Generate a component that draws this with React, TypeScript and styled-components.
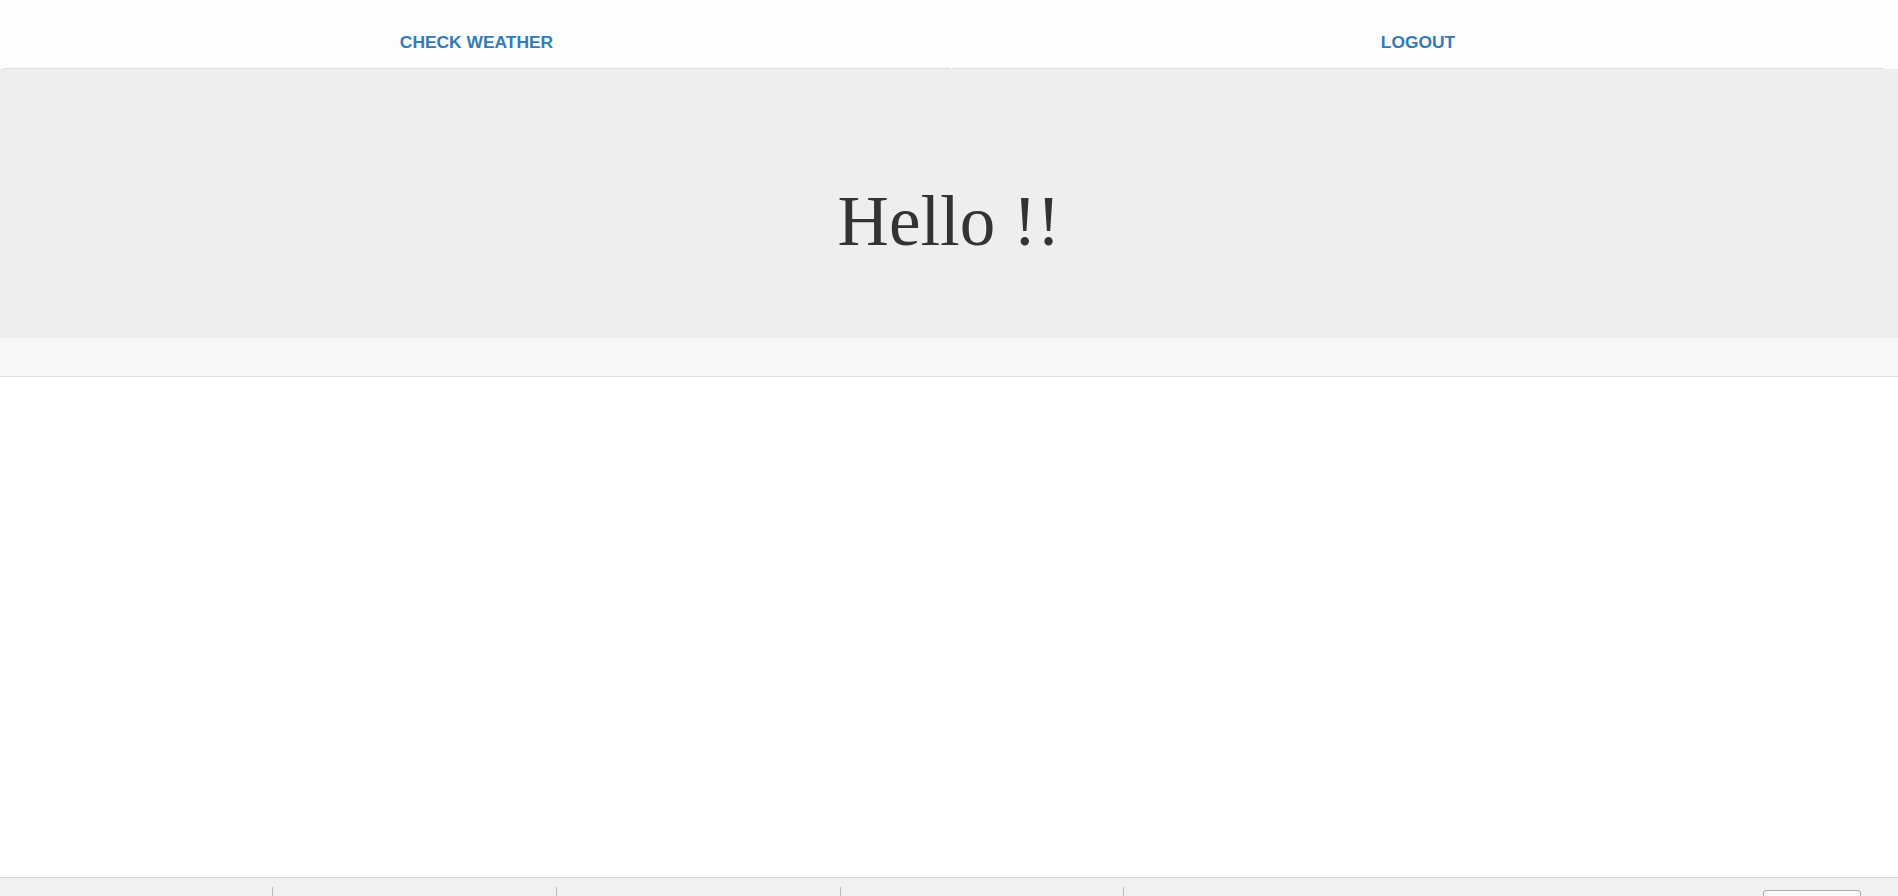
import styled, { createGlobalStyle } from 'styled-components'

const GlobalStyle = createGlobalStyle`
  html, body {
    margin: 0;
    padding: 0;
    background: #fff;
    font-family: 'Liberation Sans', Arial, sans-serif;
  }
  * {
    box-sizing: border-box;
  }
`

const Page = styled.div`
  display: flex;
  flex-direction: column;
  height: 100vh;
  overflow: hidden;
`

const Nav = styled.nav`
  display: flex;
  gap: 2px;
  padding: 0 14px 0 3px;
  background: #fdfdfd;
`

const NavCell = styled.div<{ $width?: number }>`
  flex: ${({ $width }) => ($width ? `0 0 ${$width}px` : '1')};
  height: 69px;
  padding-top: 32px;
  border-bottom: 1px solid #dddddd;
  text-align: center;
`

const NavLink = styled.a`
  font-size: 17.4px;
  line-height: 20px;
  font-weight: 700;
  color: #337ab7;
  text-decoration: none;
  cursor: pointer;
`

const Hero = styled.header`
  height: 269px;
  padding-top: 116px;
  background: #eeeeee;
  text-align: center;
`

const Title = styled.h1`
  margin: 0;
  font-family: 'Liberation Serif', 'Times New Roman', serif;
  font-weight: 400;
  font-size: 71px;
  line-height: 72px;
  color: #333333;
`

const SubBar = styled.div`
  height: 39px;
  background: #f7f7f7;
  border-bottom: 1px solid #e0e0e0;
  box-shadow: 0 2px 5px rgba(0, 0, 0, 0.08);
`

const Content = styled.main`
  flex: 1;
  background: #fff;
`

const Footer = styled.footer`
  display: flex;
  align-items: flex-start;
  height: 19px;
  flex-shrink: 0;
  background: #f1f1f1;
  border-top: 1px solid #d3d3d3;
`

const FooterCell = styled.div<{ $width: number; $first?: boolean }>`
  width: ${({ $width }) => $width}px;
  height: 100%;
  margin-top: 9px;
  border-left: ${({ $first }) => ($first ? 'none' : '1px solid #bdbdbd')};
`

const FooterSpacer = styled.div`
  flex: 1;
  height: 100%;
  margin-top: 9px;
  border-left: 1px solid #bdbdbd;
`

const FooterButton = styled.button`
  width: 98px;
  height: 20px;
  margin: 12px 37px 0 0;
  padding: 0;
  background: #fafafa;
  border: 1px solid #a9a9a9;
  border-radius: 3px;
`

export default function App() {
  return (
    <Page>
      <GlobalStyle />
      <Nav>
        <NavCell $width={947}>
          <NavLink>CHECK WEATHER</NavLink>
        </NavCell>
        <NavCell>
          <NavLink>LOGOUT</NavLink>
        </NavCell>
      </Nav>
      <Hero>
        <Title>Hello !!</Title>
      </Hero>
      <SubBar />
      <Content />
      <Footer>
        <FooterCell $width={272} $first />
        <FooterCell $width={284} />
        <FooterCell $width={284} />
        <FooterCell $width={283} />
        <FooterSpacer />
        <FooterButton />
      </Footer>
    </Page>
  )
}
